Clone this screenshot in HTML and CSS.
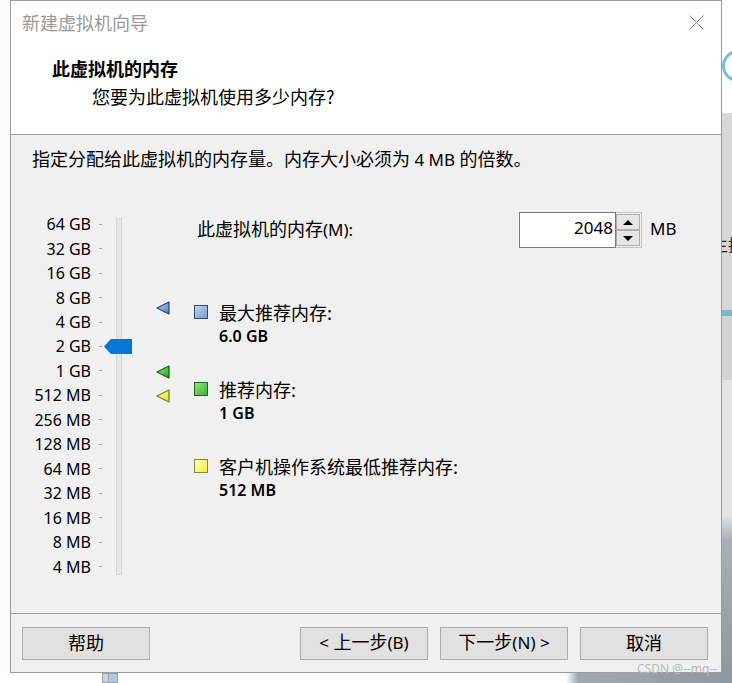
FILE: index.html
```html
<!DOCTYPE html>
<html lang="zh-CN">
<head>
    <meta charset="UTF-8">
    <meta name="viewport" content="width=device-width, initial-scale=1.0">
    <title>新建虚拟机向导</title>
    <link rel="stylesheet" href="styles.css">
</head>
<body>
    <div class="desktop">
        <div class="screen-row">
            <div class="gutter-left"></div>

            <div class="dialog">
                <div class="titlebar">
                    <span class="titlebar-text">新建虚拟机向导</span>
                    <svg class="close-icon" width="15" height="15" viewBox="0 0 15 15">
                        <path d="M0.5 0.5 L14.5 14.5 M14.5 0.5 L0.5 14.5" stroke="#7a7a7a" stroke-width="1" fill="none"/>
                    </svg>
                </div>

                <div class="header">
                    <h2 class="header-title">此虚拟机的内存</h2>
                    <p class="header-subtitle">您要为此虚拟机使用多少内存?</p>
                </div>

                <div class="content">
                    <p class="intro">指定分配给此虚拟机的内存量。内存大小必须为<span class="en"> 4 MB </span>的倍数。</p>

                    <div class="memory">
                        <div class="scale">
                            <ul class="scale-labels">
                                <li><span>64 GB</span><i class="tick"></i></li>
                                <li><span>32 GB</span><i class="tick"></i></li>
                                <li><span>16 GB</span><i class="tick"></i></li>
                                <li><span>8 GB</span><i class="tick"></i></li>
                                <li><span>4 GB</span><i class="tick"></i></li>
                                <li>
                                    <span>2 GB</span><i class="tick"></i>
                                    <svg class="thumb" width="28" height="15" viewBox="0 0 28 15">
                                        <polygon points="0,7.5 7,0 28,0 28,15 7,15" fill="#0078d7"/>
                                    </svg>
                                </li>
                                <li><span>1 GB</span><i class="tick"></i></li>
                                <li><span>512 MB</span><i class="tick"></i></li>
                                <li><span>256 MB</span><i class="tick"></i></li>
                                <li><span>128 MB</span><i class="tick"></i></li>
                                <li><span>64 MB</span><i class="tick"></i></li>
                                <li><span>32 MB</span><i class="tick"></i></li>
                                <li><span>16 MB</span><i class="tick"></i></li>
                                <li><span>8 MB</span><i class="tick"></i></li>
                                <li><span>4 MB</span><i class="tick"></i></li>
                            </ul>
                            <div class="track"></div>
                        </div>

                        <!-- marcadores: top calculado a partir do valor na escala log2 -->
                        <div class="markers">
                            <svg class="marker" style="top: 89px" width="14" height="14" viewBox="0 0 14 14">
                                <defs>
                                    <linearGradient id="gBlue" x1="0" y1="0" x2="1" y2="1">
                                        <stop offset="0" stop-color="#c6d8f4"/>
                                        <stop offset="1" stop-color="#4f78bd"/>
                                    </linearGradient>
                                </defs>
                                <polygon points="1,7 13,1 13,13" fill="url(#gBlue)" stroke="#2a4a86" stroke-width="1.3" stroke-linejoin="round"/>
                            </svg>
                            <svg class="marker" style="top: 153px" width="14" height="14" viewBox="0 0 14 14">
                                <defs>
                                    <linearGradient id="gGreen" x1="0" y1="0" x2="1" y2="1">
                                        <stop offset="0" stop-color="#9fec80"/>
                                        <stop offset="1" stop-color="#22a022"/>
                                    </linearGradient>
                                </defs>
                                <polygon points="1,7 13,1 13,13" fill="url(#gGreen)" stroke="#166416" stroke-width="1.3" stroke-linejoin="round"/>
                            </svg>
                            <svg class="marker" style="top: 177px" width="14" height="14" viewBox="0 0 14 14">
                                <defs>
                                    <linearGradient id="gYellow" x1="0" y1="0" x2="1" y2="1">
                                        <stop offset="0" stop-color="#ffffb0"/>
                                        <stop offset="1" stop-color="#e6e62a"/>
                                    </linearGradient>
                                </defs>
                                <polygon points="1,7 13,1 13,13" fill="url(#gYellow)" stroke="#7c7c22" stroke-width="1.3" stroke-linejoin="round"/>
                            </svg>
                        </div>

                        <div class="info">
                            <div class="mem-row">
                                <label class="mem-label" for="memSize">此虚拟机的内存<span class="en">(M):</span></label>
                                <div class="spinbox">
                                    <input id="memSize" class="spin-input" type="text" value="2048">
                                    <div class="spin-buttons">
                                        <button class="spin-btn spin-up" type="button"></button>
                                        <button class="spin-btn spin-down" type="button"></button>
                                    </div>
                                </div>
                                <span class="en mem-unit">MB</span>
                            </div>

                            <ul class="legend">
                                <li>
                                    <div class="legend-label"><i class="swatch swatch-max"></i>最大推荐内存:</div>
                                    <div class="legend-value">6.0 GB</div>
                                </li>
                                <li>
                                    <div class="legend-label"><i class="swatch swatch-rec"></i>推荐内存:</div>
                                    <div class="legend-value">1 GB</div>
                                </li>
                                <li>
                                    <div class="legend-label"><i class="swatch swatch-min"></i>客户机操作系统最低推荐内存:</div>
                                    <div class="legend-value">512 MB</div>
                                </li>
                            </ul>
                        </div>
                    </div>
                </div>

                <div class="footer">
                    <button class="btn" type="button">帮助</button>
                    <div class="nav-buttons">
                        <button class="btn" type="button"><span class="en">&lt; </span>上一步<span class="en">(B)</span></button>
                        <button class="btn" type="button">下一步<span class="en">(N) &gt;</span></button>
                        <button class="btn" type="button">取消</button>
                    </div>
                </div>

                <span class="watermark">CSDN @--mq--</span>
            </div>

            <div class="gutter-right">
                <div class="gutter-ring"></div>
                <div class="gutter-text">主持</div>
            </div>
        </div>

        <div class="gutter-bottom">
            <i class="pin pin-a"></i>
            <i class="pin pin-b"></i>
        </div>
    </div>
</body>
</html>
```

FILE: styles.css
```css
body {
    margin: 0;
    background-color: #ffffff;
    font-family: "Noto Sans CJK SC", sans-serif;
    font-size: 18px;
    color: #000;
}

.en {
    font-family: "Noto Sans", "Noto Sans CJK SC", sans-serif;
    font-size: 17px;
}

.desktop {
    width: 732px;
}

.screen-row {
    display: flex;
}

.gutter-left {
    width: 10px;
    background-color: #fafafa;
}

/* janela do assistente */
.dialog {
    position: relative;
    width: 712px;
    height: 673px;
    box-sizing: border-box;
    border: 1px solid #9c9c9c;
    background-color: #f0f0f0;
    display: flex;
    flex-direction: column;
}

.titlebar {
    height: 44px;
    box-sizing: border-box;
    background-color: #ffffff;
    display: flex;
    align-items: center;
    justify-content: space-between;
    padding: 0 17px 2px 11px;
}

.titlebar-text {
    color: #999;
    line-height: 24px;
}

.header {
    height: 90px;
    box-sizing: border-box;
    background-color: #ffffff;
    border-bottom: 1px solid #a0a0a0;
    padding: 11px 0 0 41px;
}

.header-title {
    margin: 0;
    font-size: 18px;
    font-weight: bold;
    line-height: 24px;
}

.header-subtitle {
    margin: 4px 0 0 40px;
    line-height: 24px;
}

.content {
    flex: 1;
    padding: 11px 0 0 21px;
}

.intro {
    margin: 0;
    line-height: 24px;
}

.memory {
    display: flex;
    margin-top: 40px;
}

/* escala do slider */
.scale {
    display: flex;
    align-items: flex-start;
}

.scale-labels {
    list-style: none;
    margin: 0;
    padding: 0;
    width: 70px;
    font-family: "Noto Sans", sans-serif;
    font-size: 16px;
}

.scale-labels li {
    position: relative;
    display: grid;
    grid-template-columns: 1fr 3px;
    column-gap: 8px;
    align-items: center;
    height: 24.46px;
    line-height: 24px;
    text-align: right;
    white-space: nowrap;
}

.tick {
    display: block;
    height: 1px;
    background-color: #ababab;
}

.thumb {
    position: absolute;
    left: 72px;
    top: 5px;
}

.track {
    width: 6px;
    height: 357px;
    box-sizing: border-box;
    margin: 6px 0 0 14px;
    border: 1px solid #d6d6d6;
    background-color: #e7e7e7;
}

.markers {
    position: relative;
    width: 14px;
    margin-left: 34px;
}

.marker {
    position: absolute;
    left: 0;
}

.info {
    margin-left: 24px;
}

.mem-row {
    display: flex;
    align-items: center;
    height: 36px;
}

.mem-label {
    width: 322px;
    padding: 0 0 3px 3px;
    line-height: 24px;
}

.spinbox {
    display: flex;
    height: 36px;
}

.spin-input {
    width: 97px;
    height: 36px;
    box-sizing: border-box;
    margin: 0;
    border: 1px solid #7a7a7a;
    padding: 0 2px 5px 0;
    background-color: #ffffff;
    text-align: right;
    font-family: "Noto Sans", sans-serif;
    font-size: 17px;
    color: #000;
    outline: none;
}

.spin-buttons {
    width: 26px;
    height: 36px;
    box-sizing: border-box;
    border: 1px solid #c4c4c4;
    border-left: none;
    padding: 1px 1px 1px 0;
    display: flex;
    flex-direction: column;
    background-color: #f0f0f0;
}

.spin-btn {
    flex: 1;
    margin: 0;
    padding: 0;
    border: 1px solid #adadad;
    background-color: #e5e5e5;
    display: flex;
    align-items: center;
    justify-content: center;
}

.spin-btn::before {
    content: "";
    border-left: 5px solid transparent;
    border-right: 5px solid transparent;
}

.spin-up::before {
    border-bottom: 5px solid #000;
}

.spin-down::before {
    border-top: 5px solid #000;
}

.mem-unit {
    margin-left: 8px;
    padding-bottom: 2px;
    line-height: 24px;
}

.legend {
    list-style: none;
    margin: 52px 0 0;
    padding: 0;
    display: flex;
    flex-direction: column;
    gap: 29px;
}

.legend-label {
    display: flex;
    align-items: center;
    gap: 11px;
    line-height: 24px;
}

.swatch {
    display: block;
    width: 14px;
    height: 14px;
    box-sizing: border-box;
    border: 1px solid;
}

.swatch-max {
    border-color: #2d4a7b;
    background: linear-gradient(135deg, #c0d3ef, #7b9bd0);
}

.swatch-rec {
    border-color: #1c6a1c;
    background: linear-gradient(135deg, #96e676, #38b038);
}

.swatch-min {
    border-color: #85852a;
    background: linear-gradient(135deg, #ffffb8, #eeee48);
}

.legend-value {
    padding-left: 25px;
    line-height: 24px;
    font-family: "Noto Sans", sans-serif;
    font-size: 16px;
    font-weight: 600;
}

/* rodapé com os botões */
.footer {
    height: 59px;
    box-sizing: border-box;
    border-top: 1px solid #a0a0a0;
    padding: 13px 13px 12px 11px;
    display: flex;
    justify-content: space-between;
    align-items: flex-start;
}

.nav-buttons {
    display: flex;
    gap: 12px;
}

.btn {
    width: 128px;
    height: 33px;
    box-sizing: border-box;
    margin: 0;
    padding: 0 0 3px;
    border: 1px solid #adadad;
    background-color: #e1e1e1;
    font-family: "Noto Sans CJK SC", sans-serif;
    font-size: 18px;
    line-height: 24px;
    color: #000;
}

.watermark {
    position: absolute;
    right: 4px;
    bottom: -3px;
    font-family: "Noto Sans", sans-serif;
    font-size: 12px;
    line-height: 12px;
    color: #b8b8b8;
}

/* pedaço da área de trabalho atrás da janela */
.gutter-right {
    width: 10px;
    height: 673px;
    overflow: hidden;
    background: linear-gradient(#ffffff 0 113px, #d7d7d7 113px 310px, #7bb8cf 310px 316px, #d3d3d3 316px 380px, #e4e4e4 380px 515px, #a8b0b7 540px, #8e98a0 100%);
}

.gutter-ring {
    width: 32px;
    height: 32px;
    box-sizing: border-box;
    margin-top: 50px;
    border: 3px solid #72c0d6;
    border-radius: 50%;
}

.gutter-text {
    margin: 154px 0 0 -10px;
    font-size: 16px;
    line-height: 16px;
    white-space: nowrap;
    color: #222;
}

.gutter-bottom {
    height: 10px;
    display: flex;
    background: linear-gradient(to right, #ffffff 0 566px, #a0a9b0 578px, #8e98a0 100%);
}

.pin {
    display: block;
    height: 10px;
    box-sizing: border-box;
}

.pin-a {
    width: 7px;
    margin-left: 102px;
    border: 1px solid #9aa0aa;
    background-color: #cdd1d8;
}

.pin-b {
    width: 9px;
    border: 1px solid #8d9ab8;
    border-left: none;
    background-color: #b9c4de;
}
```
